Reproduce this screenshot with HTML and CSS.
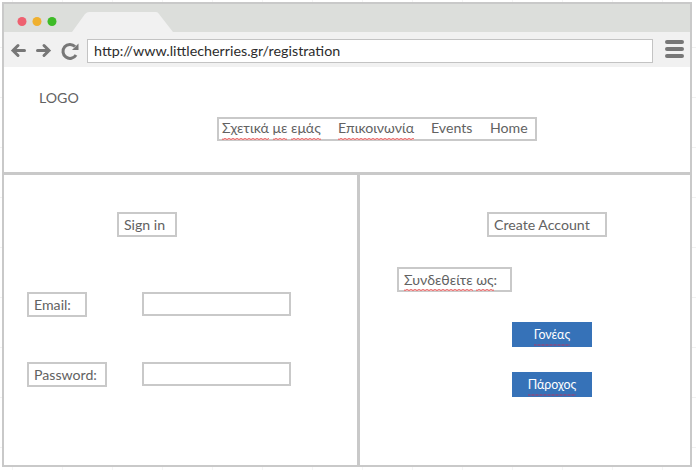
FILE: index.html
```html
<!DOCTYPE html>
<html lang="el">
<head>
<meta charset="utf-8">
<title>Registration</title>
<link rel="stylesheet" href="styles.css">
</head>
<body>
<div class="window">
  <div class="tabs">
    <svg width="686" height="28" viewBox="0 0 686 28">
      <circle cx="18" cy="17.5" r="4.5" fill="#ee6170"/>
      <circle cx="33" cy="17.5" r="4.5" fill="#efb02f"/>
      <circle cx="48" cy="17.5" r="4.5" fill="#3dbb27"/>
      <path d="M68 28 L81 10 Q83 8 85 8 H152 Q154 8 155 10 L169 28Z" fill="#f1f1f1"/>
    </svg>
  </div>
  <div class="toolbar">
    <svg class="controls" width="83" height="35" viewBox="0 0 83 35" fill="none" stroke="#777" stroke-width="3">
      <path d="M20.500 18.500H9M14 13.500L9 18.500L14 23.500" stroke-linecap="round"/>
      <path d="M33.500 18.500H45M40 13.500L45 18.500L40 23.500" stroke-linecap="round"/>
      <path d="M71 14.500A7 7 0 1 0 72 23"/>
      <path d="M74.500 11.500V18H68Z" fill="#777" stroke="none"/>
    </svg>
    <div class="address"><span class="url">http://www.littlecherries.gr/registration</span></div>
    <svg class="menu" width="20" height="35" viewBox="0 0 20 35" stroke="#777" stroke-width="4" stroke-linecap="round">
      <path d="M2 10H17M2 17H17M2 24H17"/>
    </svg>
  </div>
  <header class="header">
    <div class="logo">LOGO</div>
    <nav class="nav">
      <a class="about"><span class="typo">Σχετικά</span> <span class="typo">με</span> <span class="typo">εμάς</span></a>
      <a class="contact"><span class="typo">Επικοινωνία</span></a>
      <a class="events">Events</a>
      <a>Home</a>
    </nav>
  </header>
  <main class="panels">
    <section class="signin">
      <div class="box title">Sign in</div>
      <div class="row"><div class="label-cell"><label class="box email">Email:</label></div><div class="field"></div></div>
      <div class="row"><div class="label-cell"><label class="box password">Password:</label></div><div class="field"></div></div>
    </section>
    <section class="create">
      <div class="box create-title">Create Account</div>
      <div class="box connect"><span class="typo">Συνδεθείτε</span> <span class="typo">ως</span>:</div>
      <div class="button"><span class="typo">Γονέας</span></div>
      <div class="button"><span class="typo">Πάροχος</span></div>
    </section>
  </main>
</div>
</body>
</html>
```

FILE: styles.css
```css
* { box-sizing: border-box; }
body {
  margin: 0;
  padding: 2px;
  height: 470px;
  overflow: hidden;
  font: 14.15px/21px Lato, "Noto Sans", sans-serif;
  color: #626262;
  background:
    repeating-linear-gradient(90deg, transparent 0 12px, #f5f5f5 12px 13px, transparent 13px 50px),
    repeating-linear-gradient(transparent 0 47px, #f1f1f1 47px 48px, transparent 48px 50px),
    #fff;
}
svg { display: block; flex: none; }
.window {
  width: 690px;
  height: 465px;
  border: 2px solid #c9c9c9;
  background: #fff;
  display: flex;
  flex-direction: column;
}
.tabs { height: 28px; background: #dcdedb; }
.toolbar { height: 35px; background: #f1f1f1; display: flex; }
.address {
  width: 566px;
  height: 24px;
  margin-top: 7px;
  padding-left: 6px;
  border: 1px solid #c3c3c3;
  background: #fff;
  color: #2c2c2c;
  font-size: 14.3px;
  line-height: 22px;
}
.menu { margin-left: 12px; }
.header {
  height: 108px;
  border-bottom: 3px solid #c9c9c9;
  padding-top: 20px;
}
.logo { height: 30px; padding-left: 35px; line-height: 22px; }
.nav {
  width: 320px;
  height: 24px;
  margin-left: 213px;
  padding-left: 3px;
  border: 2px solid #c9c9c9;
  display: flex;
  line-height: 17px;
}
.nav a { white-space: nowrap; }
.about { width: 116px; }
.contact { width: 93px; }
.events { width: 59px; }
.typo { display: inline-block; position: relative; }
.typo::after {
  content: "";
  position: absolute;
  left: 0;
  right: 0;
  bottom: -1px;
  height: 2px;
  background:
    repeating-linear-gradient(90deg, #f6cccc 0 2px, #ea7c7c 2px 4px) 0 0 / 100% 1px no-repeat,
    repeating-linear-gradient(90deg, #ea7c7c 0 2px, #f3b4b4 2px 4px) 0 1px / 100% 1px no-repeat;
}
.nav .typo::after { bottom: -4px; }
.panels { flex: 1; display: flex; }
.signin { width: 356px; border-right: 3px solid #c9c9c9; padding: 37px 0 0 23px; }
.create { flex: 1; padding: 37px 0 0 37px; }
.box {
  display: block;
  height: 25px;
  padding-left: 5px;
  border: 2px solid #c9c9c9;
  white-space: nowrap;
}
.title { width: 60px; margin: 0 0 55px 90px; }
.row { display: flex; height: 25px; margin-bottom: 45px; }
.label-cell { width: 115px; }
.email { width: 60px; }
.password { width: 80px; }
.field { width: 149px; height: 24px; border: 2px solid #c9c9c9; }
.create-title { width: 120px; margin: 0 0 30px 90px; }
.connect { width: 115px; margin-bottom: 30px; }
.button {
  width: 80px;
  height: 25px;
  margin: 0 0 25px 115px;
  background: #3672b8;
  color: #fff;
  font-size: 12.4px;
  line-height: 25px;
  text-align: center;
}
.button .typo { line-height: 21px; }
.button .typo::after {
  bottom: -1px;
  height: 2px;
  background: repeating-linear-gradient(90deg, #75548d 0 2px, #5a61a0 2px 4px);
}
```
